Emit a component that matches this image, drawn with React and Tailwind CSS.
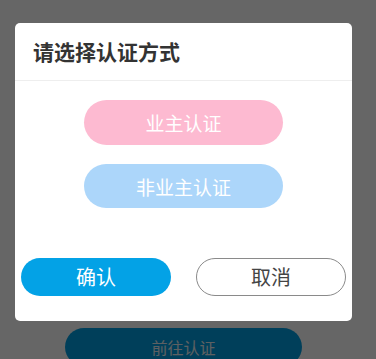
import React from 'react';

const font = { fontFamily: '"Noto Sans CJK SC", "Noto Sans", sans-serif' };

export default function App() {
  return (
    <div className="relative w-[376px] h-[359px] bg-white overflow-hidden" style={font}>
      {/* Underlying page */}
      <div className="w-[367px] pt-[328px] flex justify-center">
        <button className="w-[237px] h-[38px] rounded-full bg-[#019ee0] text-[16px] text-[#e8f0f5] leading-none">
          前往认证
        </button>
      </div>

      {/* Dim overlay + dialog */}
      <div className="absolute inset-0 bg-black/60">
        <div className="ml-[15px] mt-[23px] w-[337px] h-[298px] bg-white rounded-[5px] flex flex-col">
          <div className="h-[58px] flex items-center pl-[18px] border-b border-[#eeeeee]">
            <span className="text-[21px] font-semibold text-[#333333] leading-none">请选择认证方式</span>
          </div>

          <div className="flex flex-col items-center pt-[19px] gap-[19px]">
            <button className="w-[199px] h-[45px] rounded-full bg-[#fdbad1] text-white text-[19px] leading-none">
              业主认证
            </button>
            <button className="w-[199px] h-[44px] rounded-full bg-[#acd6fa] text-white text-[19px] leading-none">
              非业主认证
            </button>
          </div>

          <div className="flex justify-between px-[6px] mt-[50px]">
            <button className="w-[150px] h-[38px] rounded-full bg-[#03a2e6] text-white text-[20px] leading-none">
              确认
            </button>
            <button className="w-[150px] h-[38px] rounded-full border border-[#8a8a8a] bg-white text-[#444444] text-[20px] leading-none">
              取消
            </button>
          </div>
        </div>
      </div>
    </div>
  );
}
